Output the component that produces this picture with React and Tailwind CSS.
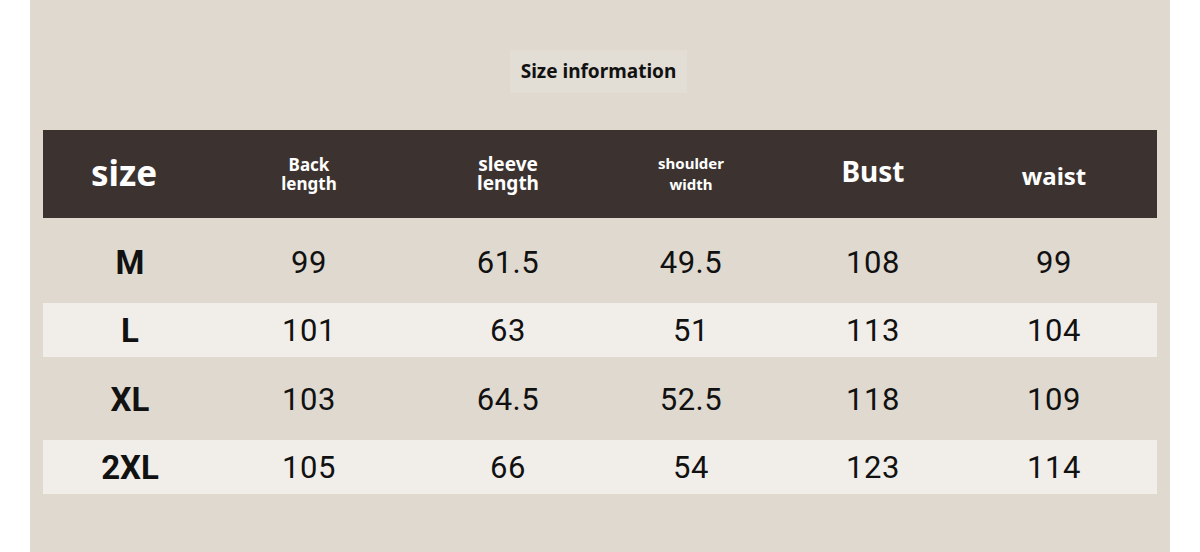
import React from 'react';

const rows = [
  { size: 'M', values: ['99', '61.5', '49.5', '108', '99'], light: false, height: 'h-[85px] pt-[3px]' },
  { size: 'L', values: ['101', '63', '51', '113', '104'], light: true, height: 'h-[54px] pt-[1px]' },
  { size: 'XL', values: ['103', '64.5', '52.5', '118', '109'], light: false, height: 'h-[83px] pt-[1px]' },
  { size: '2XL', values: ['105', '66', '54', '123', '114'], light: true, height: 'h-[54px]' },
];

const cols = 'grid grid-cols-[174px_184px_214px_152px_212px_150px_1fr]';

const App = () => {
  return (
    <div className="min-h-[552px] bg-white font-['Noto_Sans',sans-serif]">
      <div className="mx-[30px] h-[552px] bg-[#e0d9d0] px-[13px] pt-[50px]">
        {/* Title */}
        <div className="flex justify-center pr-[3px]">
          <div className="flex h-[43px] w-[177px] items-center justify-center bg-[#e2ddd5] text-[19px] font-bold text-[#111]">
            Size information
          </div>
        </div>

        {/* Header */}
        <div className={`${cols} mt-[37px] h-[88px] items-center bg-[#3c3330] text-center font-bold leading-none text-white`}>
          <div className="pr-3 pb-[4px] text-[35px]">size</div>
          <div className="flex flex-col text-[17px] leading-[19px]">
            <span>Back</span>
            <span>length</span>
          </div>
          <div className="flex flex-col text-[19px] leading-[19px]">
            <span>sleeve</span>
            <span>length</span>
          </div>
          <div className="flex flex-col text-[15px] leading-[21px]">
            <span>shoulder</span>
            <span>width</span>
          </div>
          <div className="pb-[6px] text-[28px]">Bust</div>
          <div className="pt-[3px] text-[24px]">waist</div>
          <div />
        </div>

        {/* Body */}
        {rows.map((row) => (
          <div
            key={row.size}
            className={`${cols} ${row.height} items-center text-center leading-none text-[#111] ${
              row.light ? 'bg-[#f1eeea]' : ''
            }`}
          >
            <div className="font-['Roboto',sans-serif] text-[33px] font-bold">{row.size}</div>
            {row.values.map((v, i) => (
              <div key={i} className="font-['Roboto',sans-serif] text-[31px] tracking-[0.5px]">
                {v}
              </div>
            ))}
            <div />
          </div>
        ))}
      </div>
    </div>
  );
};

export default App;
